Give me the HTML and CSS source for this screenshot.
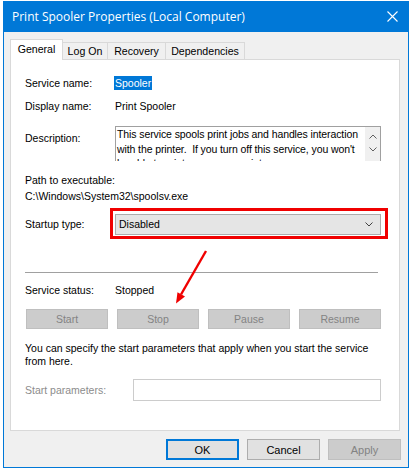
FILE: index.html
```html
<!DOCTYPE html>
<html lang="en">

<head>
  <meta charset="UTF-8">
  <title>Print Spooler Properties (Local Computer)</title>
  <link rel="stylesheet" href="styles.css">
</head>

<body>
  <div class="window">
    <div class="titlebar">
      <span class="title">Print Spooler Properties (Local Computer)</span>
      <svg class="close" width="11" height="11" viewBox="0 0 11 11">
        <path d="M0.5 0.5 L10.5 10.5 M10.5 0.5 L0.5 10.5" stroke="#fff" stroke-width="1.1" fill="none" />
      </svg>
    </div>

    <div class="content">
      <div class="tabs">
        <div class="tab active">General</div>
        <div class="tab tab-logon">Log On</div>
        <div class="tab tab-recovery">Recovery</div>
        <div class="tab tab-deps">Dependencies</div>
      </div>

      <div class="panel">
        <div class="row row-name">
          <div class="lbl">Service name:</div>
          <div class="val"><span class="selected">Spooler</span></div>
        </div>

        <div class="row row-display">
          <div class="lbl">Display name:</div>
          <div class="val">Print Spooler</div>
        </div>

        <div class="row row-desc">
          <div class="lbl lbl-desc">Description:</div>
          <div class="desc-box">
            <div class="desc-text">This service spools print jobs and handles interaction with the printer.&nbsp; If you turn off this service, you won't be able to print or see your printers.</div>
            <div class="scroll">
              <svg width="8" height="5" viewBox="0 0 8 5"><path d="M0.5 4.5 L4 1 L7.5 4.5" stroke="#606060" fill="none" /></svg>
              <svg width="8" height="5" viewBox="0 0 8 5"><path d="M0.5 0.5 L4 4 L7.5 0.5" stroke="#606060" fill="none" /></svg>
            </div>
          </div>
        </div>

        <div class="path-label">Path to executable:</div>
        <div class="path-value">C:\Windows\System32\spoolsv.exe</div>

        <div class="row row-startup">
          <div class="lbl">Startup type:</div>
          <div class="select">
            <span>Disabled</span>
            <svg width="8" height="5" viewBox="0 0 8 5"><path d="M0.5 0.5 L4 4 L7.5 0.5" stroke="#404040" fill="none" /></svg>
          </div>
        </div>

        <div class="separator"></div>

        <div class="row row-status">
          <div class="lbl">Service status:</div>
          <div class="val">Stopped</div>
        </div>

        <div class="actions">
          <button class="btn" disabled>Start</button>
          <button class="btn" disabled>Stop</button>
          <button class="btn" disabled>Pause</button>
          <button class="btn" disabled>Resume</button>
        </div>

        <p class="note">You can specify the start parameters that apply when you start the service from here.</p>

        <div class="row row-params">
          <div class="lbl lbl-params">Start parameters:</div>
          <div class="params-input"></div>
        </div>
      </div>

      <div class="footer">
        <button class="btn-dlg default">OK</button>
        <button class="btn-dlg">Cancel</button>
        <button class="btn-dlg" disabled>Apply</button>
      </div>
    </div>
  </div>

  <!-- annotation arrow drawn over the dialog -->
  <svg class="arrow" width="412" height="471" viewBox="0 0 412 471">
    <line x1="206" y1="251" x2="181" y2="294.5" stroke="#f00000" stroke-width="2.4" />
    <polygon points="176,303.5 185,296.5 177.5,292.3" fill="#f00000" />
  </svg>
</body>

</html>
```

FILE: styles.css
```css
body {
  margin: 0;
  background: #fff;
  font-family: 'Liberation Sans', Arial, sans-serif;
  font-size: 10.5px;
  color: #000;
  position: relative;
  width: 412px;
  height: 471px;
  overflow: hidden;
}

.window {
  box-sizing: border-box;
  width: 406px;
  height: 467px;
  margin: 1px 0 0 3px;
  border: 1px solid #0078d7;
  border-top: none;
  background: #f0f0f0;
}

.titlebar {
  height: 31px;
  margin: 0 -1px;
  background: #0078d7;
  display: flex;
  align-items: center;
  justify-content: space-between;
  padding: 0 11px 0 9px;
}

.title {
  color: #fff;
  font-family: 'Open Sans', sans-serif;
  font-size: 12px;
}

.content {
  padding: 7px 8px 0 6px;
}

.tabs {
  display: flex;
  align-items: flex-end;
  height: 20px;
  position: relative;
  z-index: 1;
}

.tab {
  box-sizing: border-box;
  height: 17px;
  border: 1px solid #d9d9d9;
  border-bottom: none;
  margin-left: -1px;
  background: #f0f0f0;
  font-size: 10.6px;
  line-height: 17px;
  text-align: center;
}

.tab.active {
  height: 21px;
  margin-bottom: -1px;
  margin-left: 0;
  background: #fff;
  width: 53px;
  line-height: 19px;
}

.tab-logon { width: 46px; }
.tab-recovery { width: 59px; }
.tab-deps { width: 80px; }

.panel {
  box-sizing: border-box;
  height: 372px;
  border: 1px solid #d9d9d9;
  background: #fff;
  padding: 0 18px 0 14px;
}

.row {
  display: flex;
  align-items: center;
  line-height: 15px;
}

.lbl {
  width: 90px;
  flex: none;
}

.row-name { margin-top: 16px; }
.row-display { margin-top: 8px; }

.selected {
  display: inline-block;
  background: #0078d7;
  color: #fff;
  line-height: 14px;
  padding: 0 1px 0 1px;
  margin-left: -1px;
}

.row-desc {
  margin-top: 12px;
  align-items: flex-start;
}

.lbl-desc { padding-top: 5px; }

.desc-box {
  box-sizing: border-box;
  width: 266px;
  height: 35px;
  border: 1px solid #a0a0a0;
  border-bottom: none;
  display: flex;
  overflow: hidden;
}

.desc-text {
  flex: 1;
  padding: 0 0 0 1px;
  line-height: 14.5px;
  letter-spacing: -0.1px;
}

.scroll {
  width: 15px;
  flex: none;
  background: #f0f0f0;
  display: flex;
  flex-direction: column;
  align-items: center;
  gap: 8px;
  padding-top: 7px;
}

.path-label {
  margin-top: 12px;
  line-height: 15px;
}

.path-value {
  margin-top: 1px;
  line-height: 15px;
}

.row-startup { margin-top: 10px; }

.select {
  position: relative;
  box-sizing: border-box;
  width: 267px;
  height: 21px;
  border: 1px solid #acacac;
  background: #e5e5e5;
  display: flex;
  align-items: center;
  justify-content: space-between;
  padding: 0 7px 0 3px;
}

/* red highlight box round the startup type */
.select::after {
  content: "";
  position: absolute;
  left: -6px;
  right: -8px;
  top: -7px;
  bottom: -5px;
  border: 3px solid #f00000;
}

.separator {
  margin-top: 37px;
  height: 1px;
  width: 353px;
  background: #a0a0a0;
}

.row-status { margin-top: 10px; }

.actions {
  margin-top: 11px;
  display: flex;
  justify-content: space-between;
  padding-left: 1px;
}

.btn {
  box-sizing: border-box;
  width: 82px;
  height: 20px;
  border: 1px solid #bfbfbf;
  background: #cccccc;
  color: #838383;
  font: inherit;
  padding: 0;
}

.note {
  margin: 13px 0 0 0;
  line-height: 12.5px;
}

.row-params { margin-top: 12px; }

.lbl-params {
  width: 108px;
  color: #8c8c8c;
}

.params-input {
  box-sizing: border-box;
  width: 249px;
  height: 22px;
  border: 1px solid #cccccc;
  background: #fff;
}

.footer {
  display: flex;
  justify-content: flex-end;
  gap: 8px;
  margin-top: 8px;
  margin-right: -1px;
}

.btn-dlg {
  box-sizing: border-box;
  width: 73px;
  height: 21px;
  border: 1px solid #adadad;
  background: #e1e1e1;
  color: #000;
  font: inherit;
  font-size: 11px;
  padding: 0;
}

.btn-dlg.default {
  border: 2px solid #0078d7;
}

.btn-dlg:disabled {
  background: #cccccc;
  border-color: #bfbfbf;
  color: #838383;
}

.arrow {
  position: absolute;
  left: 0;
  top: 0;
  pointer-events: none;
}
```
